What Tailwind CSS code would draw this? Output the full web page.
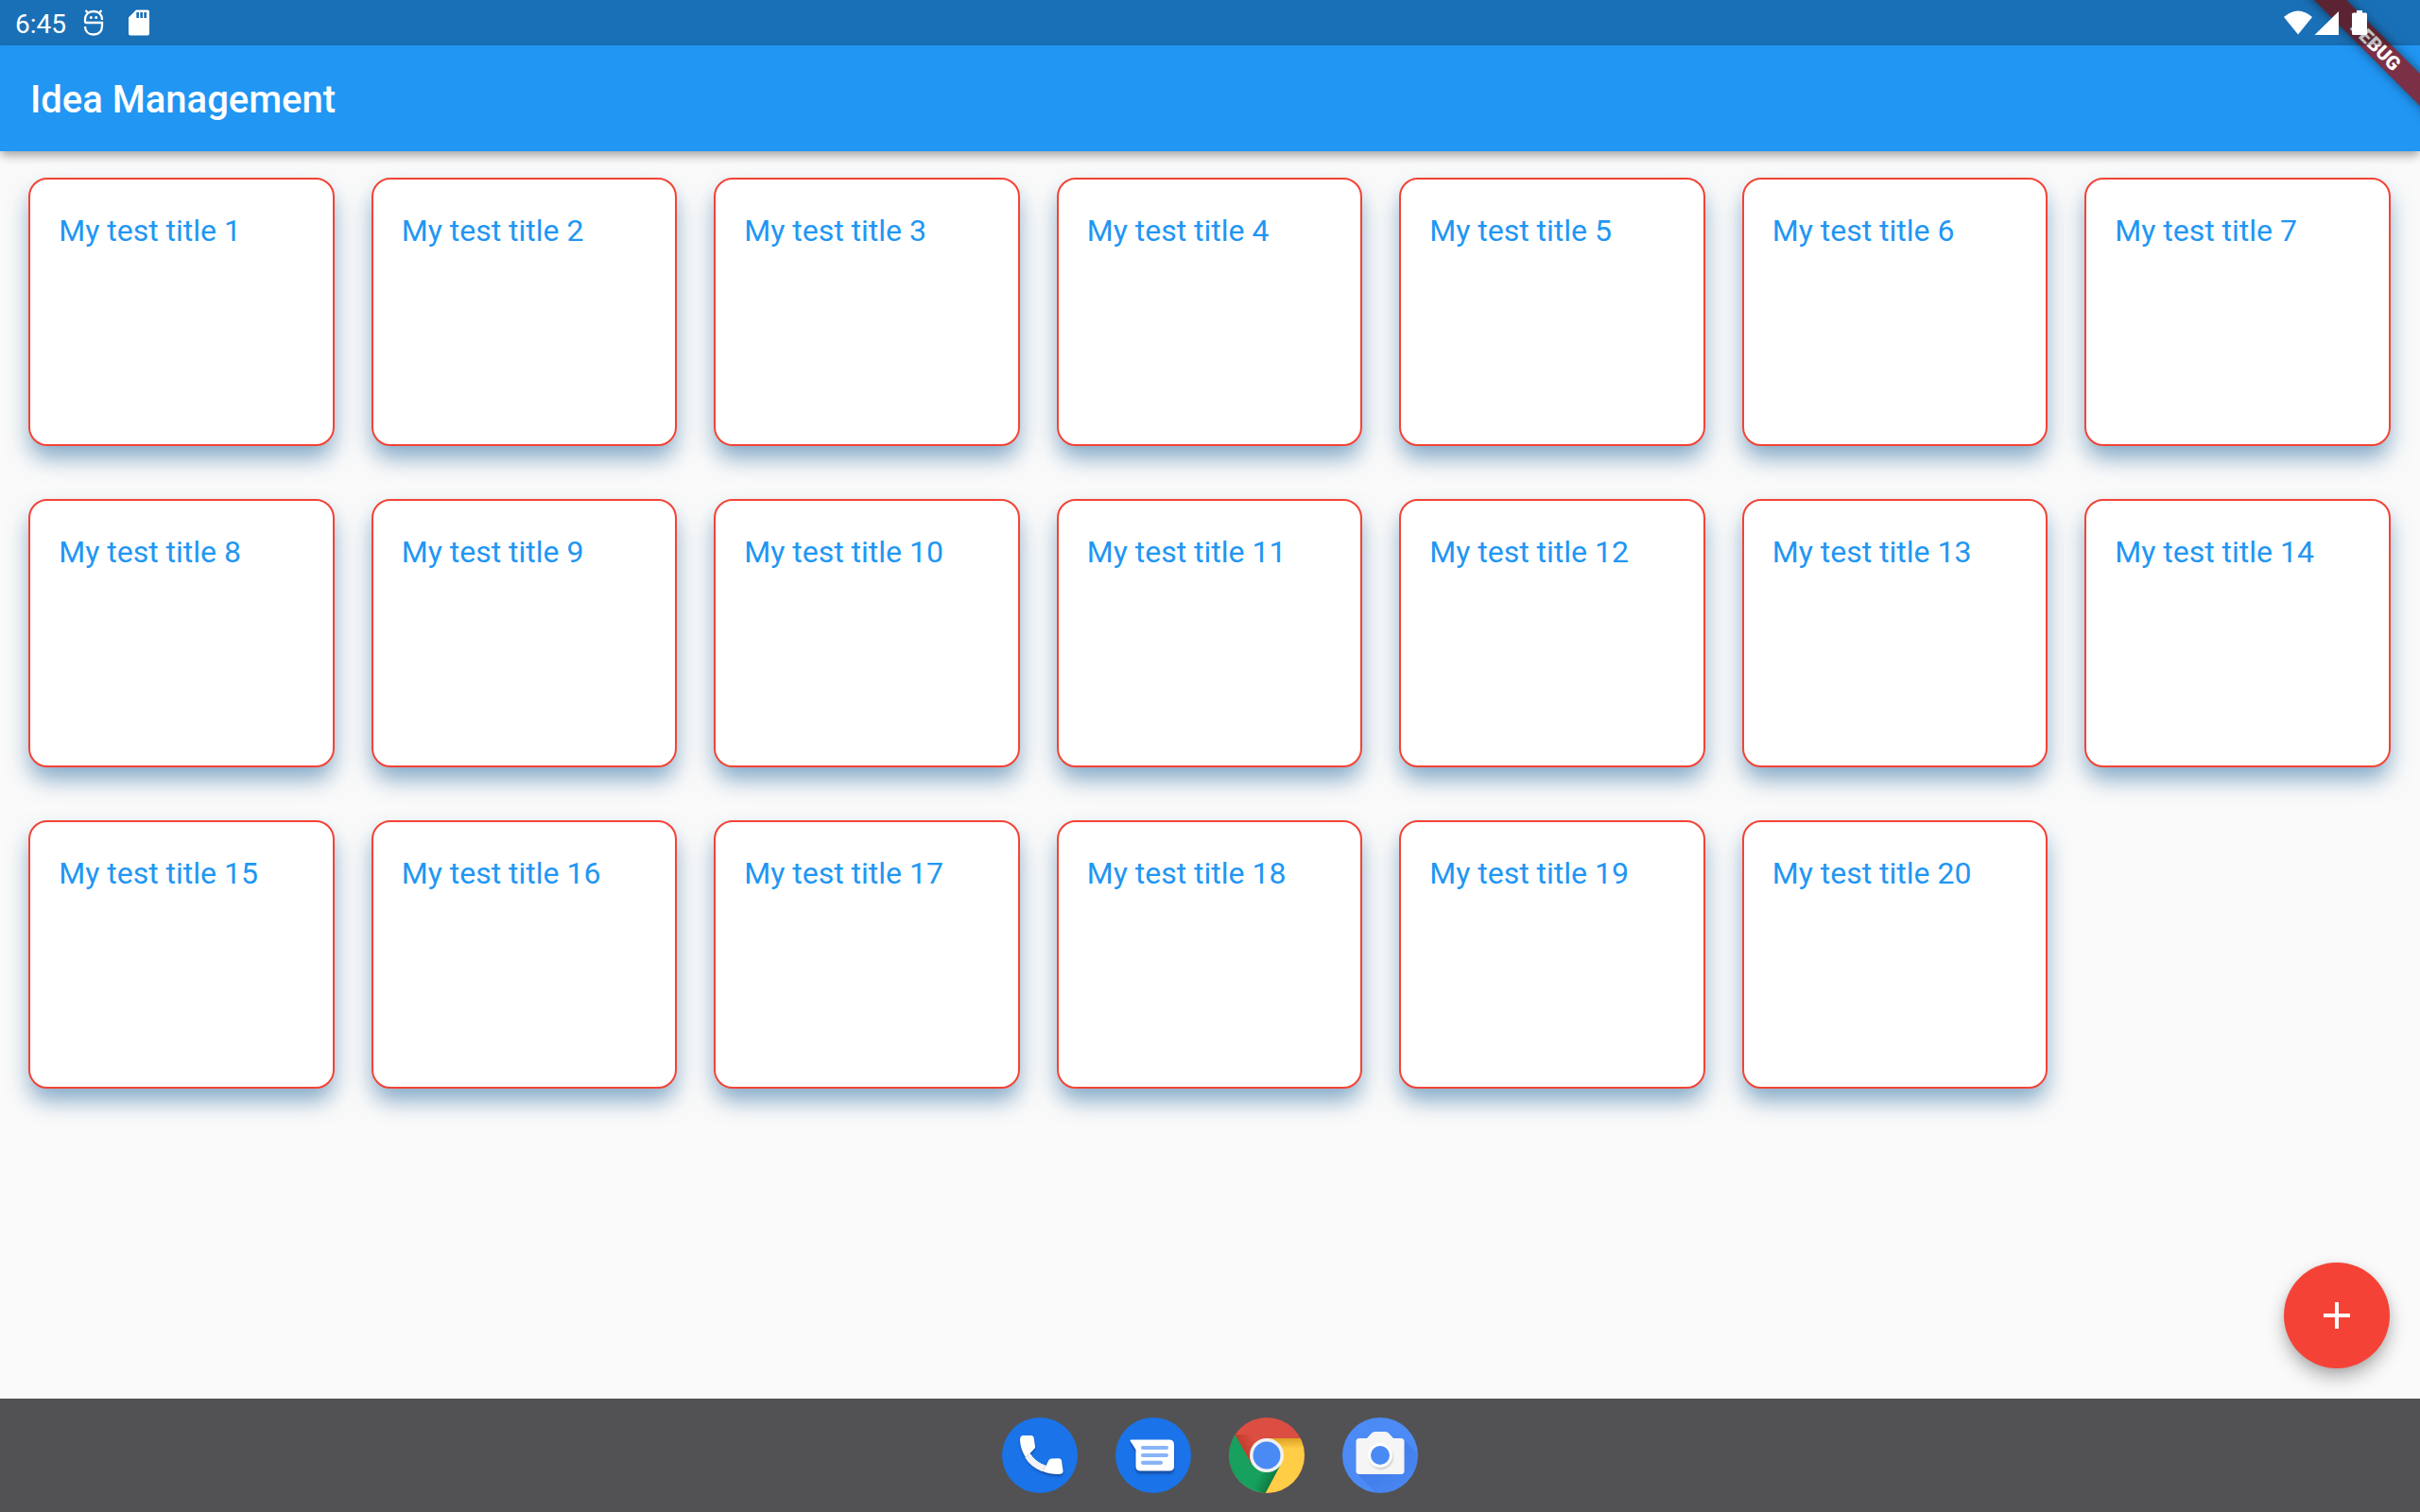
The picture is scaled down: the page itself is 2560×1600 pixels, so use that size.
<!DOCTYPE html>
<html lang="en">
<head>
<meta charset="utf-8">
<title>Idea Management</title>
<script src="https://cdn.jsdelivr.net/npm/@tailwindcss/browser@4"></script>
</head>
<body class="w-[2560px] h-[1600px] overflow-hidden bg-[#fafafa] font-[Roboto,sans-serif] flex flex-col relative">
  <header class="relative shrink-0 h-12 bg-[#1a70b7] flex items-center justify-between text-white">
    <div class="flex items-center h-12 pl-4">
      <span class="text-[28px] leading-none pt-1 w-[72px]">6:45</span>
      <svg class="w-[22px] h-7" viewBox="0 0 22 28" fill="none" stroke="#fff" stroke-width="2.300">
        <path d="M20 11C20 5.500 16.500 2 11 2S2 5.500 2 11V12.500Q2 14 3.500 14H20V17.500C20 23 16.500 26.500 11 26.500S2 23 2 18M2.500 1l3 3M19.500 1l-3 3"/>
        <circle cx="8.300" cy="8.500" r="1.500" fill="#fff" stroke="none"/><circle cx="13.700" cy="8.500" r="1.500" fill="#fff" stroke="none"/>
      </svg>
      <svg class="w-[22px] h-7 ml-[26px]" viewBox="0 0 22 28"><path fill="#fff" fill-rule="evenodd" d="M8 .5H20a2 2 0 0 1 2 2V25.500a2 2 0 0 1-2 2H2a2 2 0 0 1-2-2V8.500zM8.300 3V9H11V3zM12.300 3V9H15V3zM16.300 3V9H19V3z"/></svg>
    </div>
  </header>
  <div class="relative shrink-0 h-28 bg-[#2196f3] flex items-center pl-8 pt-[3px] shadow-[0_6px_10px_-1px_rgba(0,0,0,0.3),0_2px_6px_rgba(0,0,0,0.06)]">
    <h1 class="text-[40px] font-medium text-white leading-none">Idea Management</h1>
  </div>
  <main id="grid" class="flex-1 grid grid-cols-[repeat(7,323.500px)] auto-rows-[284px] content-start gap-x-[39px] gap-y-14 pl-[30.400px] pt-7"></main>
  <footer class="relative shrink-0 h-[120px] bg-[#525254] flex items-center justify-center gap-10">
    <svg class="size-20" viewBox="0 0 80 80">
      <defs><filter id="soft"><feGaussianBlur stdDeviation="1"/></filter></defs>
      <circle cx="40" cy="40" r="40" fill="#1a73e8"/>
      <path d="M22.500 19H31Q33.300 19 33.700 21.500L35 30.500Q35.200 32 34 33.300L29.500 38Q35 47 45 51L49.500 45Q50.500 43.500 52.500 43.500L60 43.300Q62.300 43.300 63 45.500L64.500 56Q65 60 60 60C40 61 20 45 19 24Q19 19 22.500 19z" fill="#174ea6" transform="translate(0 2)" filter="url(#soft)"/>
      <path d="M22.500 19H31Q33.300 19 33.700 21.500L35 30.500Q35.200 32 34 33.300L29.500 38Q35 47 46.500 51L49.500 45Q50.500 43.500 52.500 43.500L60 43.300Q62.300 43.300 63 45.500L64.500 56Q65 60 60 60C40 61 20 45 19 24Q19 19 22.500 19z" fill="#fff"/>
      <path d="M29.500 38Q35 47 46.500 51L42 57Q30 52 24.500 42.500z" fill="#f1f3f4"/>
      <path d="M29.500 38L24.500 42.500M46.500 51L42 57" stroke="#d5d7da" stroke-width="1"/>
    </svg>
    <svg class="size-20" viewBox="0 0 80 80">
      <circle cx="40" cy="40" r="40" fill="#1a73e8"/>
      <path d="M15.500 23.500H57Q62 23.500 62 28.500V51.500Q62 56.500 57 56.500H26.500Q21.500 56.500 21.500 51.500V34z" fill="#174ea6" transform="translate(0 3)" filter="url(#soft)"/>
      <path d="M16.500 23.500H57Q62 23.500 62 28.500V51.500Q62 56.500 57 56.500H26.500Q21.500 56.500 21.500 51.500V34L15.800 25Q15 23.500 16.500 23.500z" fill="#fff"/>
      <path d="M29 32H54M29 40H54M29 47.800H48" stroke="#8ab4f8" stroke-width="4.200" stroke-linecap="round"/>
    </svg>
    <svg class="size-20" viewBox="0 0 80 80">
      <defs>
        <clipPath id="disc"><circle cx="40" cy="40" r="40"/></clipPath>
        <linearGradient id="rs" gradientUnits="userSpaceOnUse" x1="13" y1="34" x2="28" y2="25"><stop offset="0" stop-color="#a52714" stop-opacity=".5"/><stop offset="1" stop-color="#a52714" stop-opacity="0"/></linearGradient>
        <linearGradient id="ys" x1="0" y1="0" x2="0" y2="1"><stop offset="0" stop-color="#ba7600" stop-opacity=".5"/><stop offset="1" stop-color="#ba7600" stop-opacity="0"/></linearGradient>
        <linearGradient id="gs" gradientUnits="userSpaceOnUse" x1="48" y1="64" x2="34" y2="57"><stop offset="0" stop-color="#055524" stop-opacity=".5"/><stop offset="1" stop-color="#055524" stop-opacity="0"/></linearGradient>
      </defs>
      <g clip-path="url(#disc)">
        <path d="M0 0H80V80H0z" fill="#db4e41"/>
        <path d="M40 22H80V80H38.500L55 49z" fill="#ffcd46"/>
        <path d="M6.500 18L24 49 40 58 54 51 38 81H0V18z" fill="#17a05e"/>
        <path d="M6.500 18L24 49 40 40V18z" fill="url(#rs)"/>
        <path d="M40 22H80V33H54z" fill="url(#ys)"/>
        <path d="M54 51L38 81 20 72 40 56z" fill="url(#gs)"/>
      </g>
      <circle cx="40" cy="40" r="18" fill="#f1f1f1"/><circle cx="40" cy="40" r="14.500" fill="#4a8af4"/>
    </svg>
    <svg class="size-20" viewBox="0 0 80 80">
      <defs><linearGradient id="cs" gradientUnits="userSpaceOnUse" x1="40" y1="40" x2="66" y2="68"><stop offset="0" stop-color="#3367d6" stop-opacity=".4"/><stop offset="1" stop-color="#3367d6" stop-opacity=".15"/></linearGradient></defs>
      <circle cx="40" cy="40" r="40" fill="#4c8bf5"/>
      <path clip-path="url(#disc)" d="M64.500 23L90 49V90H46L15.500 59.500z" fill="url(#cs)"/>
      <path d="M18 22H26L31 16.500Q32.500 15 34.500 15H45.500Q47.500 15 49 16.500L54 22H62Q65.500 22 65.500 25.500V56.500Q65.500 60 62 60H18Q14.500 60 14.500 56.500V25.500Q14.500 22 18 22z" fill="#f5f5f5"/>
      <circle cx="41" cy="42" r="12.500" fill="#c4c4c4" filter="url(#soft)"/>
      <circle cx="40" cy="40" r="13" fill="#fff"/><circle cx="40" cy="40" r="10" fill="#4a8af4"/>
    </svg>
  </footer>
  <button class="absolute right-8 bottom-[152px] size-28 rounded-full bg-[#f44336] flex items-center justify-center shadow-[0_10px_20px_-1px_rgba(0,0,0,0.3),0_2px_8px_rgba(0,0,0,0.08)]">
    <svg class="size-7" viewBox="0 0 28 28"><path d="M12 0h4v12h12v4H16v12h-4V16H0v-4h12z" fill="#fff"/></svg>
  </button>
  <div class="absolute right-0 top-0 size-[200px] overflow-hidden pointer-events-none">
    <div class="absolute left-[32.500px] top-[35.500px] w-[240px] h-6 rotate-45 bg-[#7b3045] shadow-[0_0_12px_rgba(0,0,0,0.5)] flex items-center justify-center text-white text-[20.400px] font-black leading-none">DEBUG</div>
    <div class="absolute inset-x-0 top-0 h-12 bg-black/25 [clip-path:polygon(88px_0,122px_0,170px_48px,136px_48px)]"></div>
    <svg class="absolute right-0 top-0 w-[200px] h-12" viewBox="0 0 200 48" fill="#fff">
      <path d="M56 18Q71 5 86 18L71 36.500zM114 12V37H88.500zM133 11H139V13.500H142.500A1.500 1.500 0 0 1 144 15V35.500a1.500 1.500 0 0 1-1.500 1.500H129.500a1.500 1.500 0 0 1-1.500-1.500V15A1.500 1.500 0 0 1 129.500 13.500H133z"/>
    </svg>
  </div>
  <script>
    document.getElementById('grid').innerHTML = Array.from({ length: 20 }, (_, i) =>
      `<article class="rounded-[20px] border-2 border-[#f44336] bg-white px-[29.800px] pt-[35px] text-[32px] leading-[38px] text-[#2196f3] shadow-[0_14px_24px_-2px_rgba(26,97,154,0.54)]">My test title ${i + 1}</article>`
    ).join('');
  </script>
</body>
</html>
